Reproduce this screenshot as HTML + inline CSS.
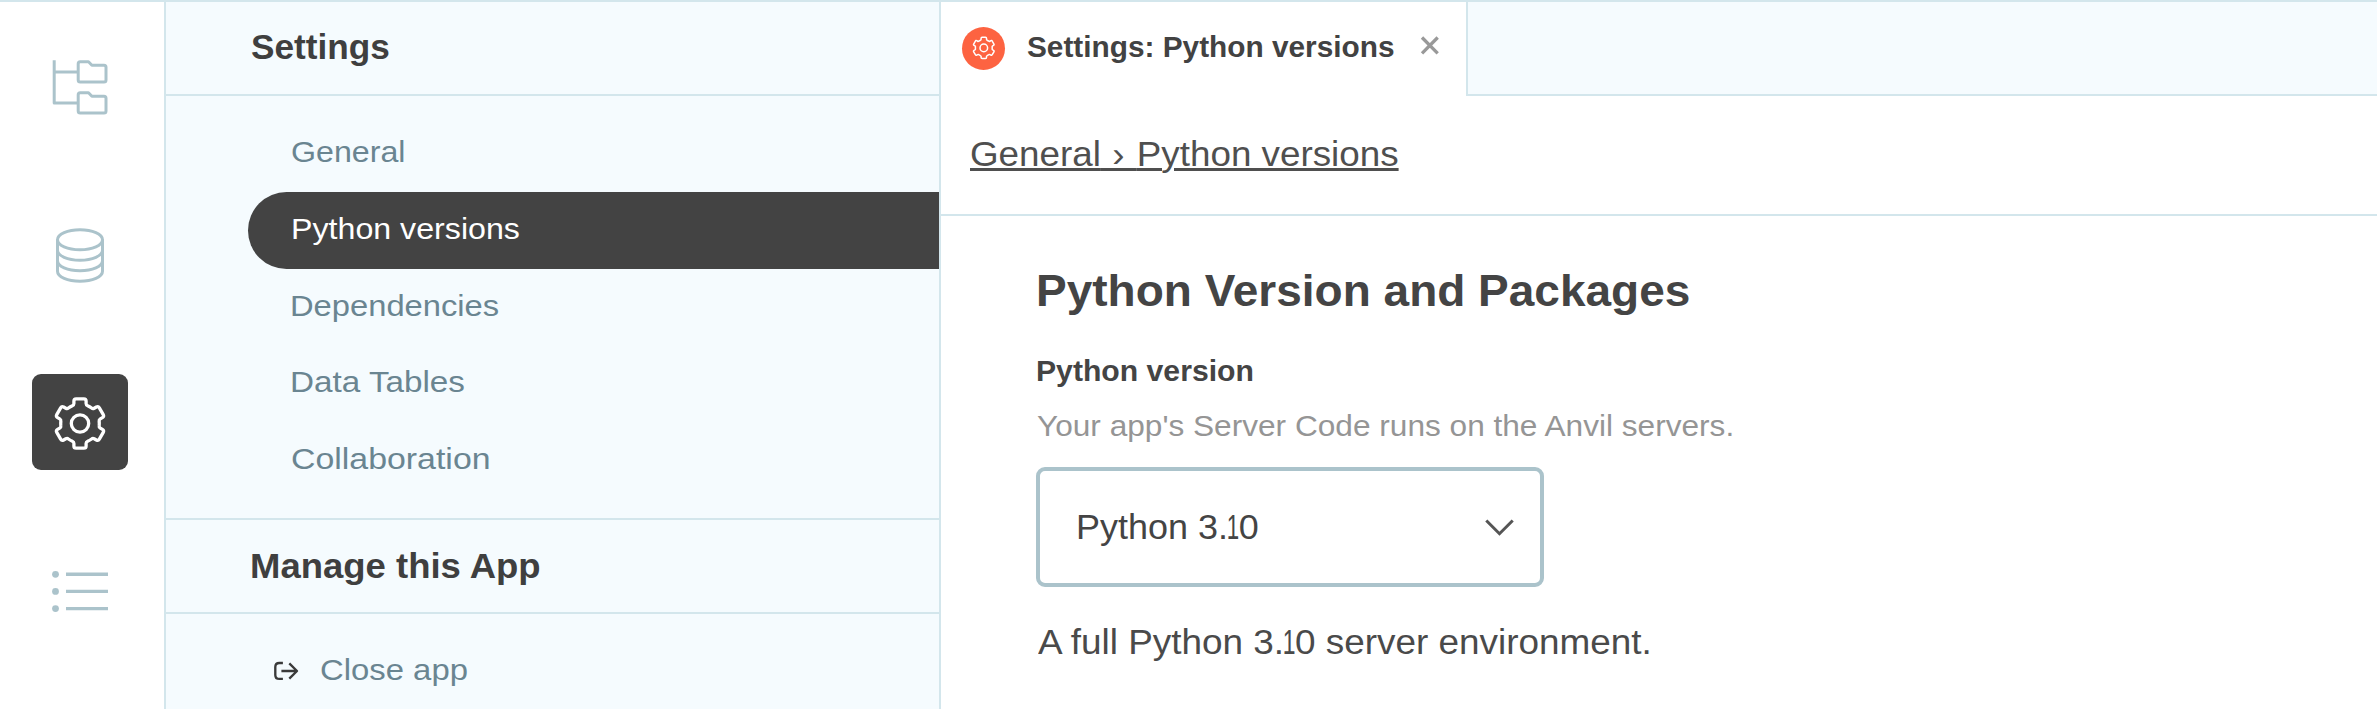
<!DOCTYPE html>
<html><head><meta charset="utf-8">
<style>
html,body{margin:0;padding:0;}
body{width:2377px;height:709px;position:relative;overflow:hidden;background:#fff;font-family:"Liberation Sans",sans-serif;}
.a{position:absolute;}
.t{position:absolute;white-space:nowrap;line-height:1;transform-origin:0 0;}
.one{display:inline-block;transform:scaleX(0.62);margin:0 -0.12em 0 -0.14em;}
#topb{left:0;top:0;width:2377px;height:2px;background:#d3e6ec;}
#side{left:164px;top:2px;width:773px;height:707px;background:#f5fbfe;border-left:2px solid #d3e6ec;border-right:2px solid #d3e6ec;}
.hl{position:absolute;height:2px;background:#d3e6ec;}
#pill{left:248px;top:192px;width:691px;height:77px;background:#434343;border-radius:38.5px 0 0 38.5px;}
#fill{left:1466px;top:2px;width:911px;height:92px;background:#f5fbfe;border-left:2px solid #d3e6ec;border-bottom:2px solid #d3e6ec;}
#gearbox{left:32px;top:374px;width:96px;height:96px;background:#434343;border-radius:9px;}
#circ{left:962px;top:26.7px;width:43.2px;height:43.2px;border-radius:50%;background:#fd6341;}
#dbox{left:1036px;top:467px;width:500px;height:112px;border:4px solid #abc3cb;border-radius:9px;}
#hdr{left:250.99px;top:29.88px;font-size:34.4px;font-weight:700;transform:scaleX(1.0239);color:#3f3f3f;}
#gen{left:290.88px;top:138.32px;font-size:28.8px;font-weight:400;transform:scaleX(1.1170);color:#6a8591;}
#pyv{left:290.61px;top:214.92px;font-size:28.8px;font-weight:400;transform:scaleX(1.1172);color:#fff;}
#dep{left:290.09px;top:291.62px;font-size:28.8px;font-weight:400;transform:scaleX(1.1359);color:#6a8591;}
#dt{left:290.04px;top:367.62px;font-size:28.8px;font-weight:400;transform:scaleX(1.1547);color:#6a8591;}
#col{left:291.04px;top:445.12px;font-size:28.8px;font-weight:400;transform:scaleX(1.1760);color:#6a8591;}
#man{left:250.28px;top:548.75px;font-size:34.2px;font-weight:700;transform:scaleX(1.0673);color:#3f3f3f;}
#close{left:319.67px;top:655.03px;font-size:29.5px;font-weight:400;transform:scaleX(1.1137);color:#6a8591;}
#tab{left:1026.97px;top:32.54px;font-size:28.9px;font-weight:700;transform:scaleX(1.0311);color:#424242;}
#bc{left:969.59px;top:136.97px;font-size:34.3px;font-weight:400;transform:scaleX(1.0728);color:#4f4f4f;text-decoration:underline;text-decoration-thickness:2.6px;text-underline-offset:2.2px;}
#h1{left:1035.75px;top:268.04px;font-size:45.2px;font-weight:700;transform:scaleX(1.0178);color:#444;}
#lab{left:1035.95px;top:356.31px;font-size:29.4px;font-weight:700;transform:scaleX(1.0263);color:#444;}
#desc{left:1036.91px;top:411.55px;font-size:29px;font-weight:400;transform:scaleX(1.0901);color:#959595;}
#dd{left:1076.13px;top:509.27px;font-size:35px;font-weight:400;transform:scaleX(1.0276);color:#444;}
#fin{left:1038.00px;top:625.07px;font-size:34.3px;font-weight:400;transform:scaleX(1.0757);color:#4a4a4a;}
svg{position:absolute;left:0;top:0;overflow:visible;}
</style></head><body>
<div class="a" id="topb"></div>
<div class="a" id="side"></div>
<div class="hl" style="left:166px;top:94px;width:773px;"></div>
<div class="hl" style="left:166px;top:518px;width:773px;"></div>
<div class="hl" style="left:166px;top:612px;width:773px;"></div>
<div class="a" id="fill"></div>
<div class="hl" style="left:941px;top:214px;width:1436px;"></div>
<div class="a" id="pill"></div>
<div class="a" id="gearbox"></div>
<div class="a" id="circ"></div>
<div class="a" id="dbox"></div>
<svg width="2377" height="709" viewBox="0 0 2377 709">
 <g fill="none" stroke="#abc3cb" stroke-width="3" stroke-linejoin="round" stroke-linecap="butt">
  <path d="M54.2 60.2 V103 H78.2 M54.2 72 H78.2"/>
  <path d="M80.2 61.7 H88.5 L91.9 65.2 H104 Q106 65.2 106 67.2 V80.1 Q106 82.1 104 82.1 H80.2 Q78.2 82.1 78.2 80.1 V63.7 Q78.2 61.7 80.2 61.7 Z"/>
  <path d="M80.2 92.7 H88.5 L91.9 96.2 H104 Q106 96.2 106 98.2 V111.1 Q106 113.1 104 113.1 H80.2 Q78.2 113.1 78.2 111.1 V94.7 Q78.2 92.7 80.2 92.7 Z"/>
  <ellipse cx="80" cy="239.7" rx="22.5" ry="10"/>
  <path d="M57.5 239.7 V271.3 A22.5 10 0 0 0 102.5 271.3 V239.7 M57.5 250.2 A22.5 10 0 0 0 102.5 250.2 M57.5 260.8 A22.5 10 0 0 0 102.5 260.8"/>
  <path d="M66 574.3 H108 M66 591.4 H108 M66 608.6 H108" stroke-width="3.4"/>
 </g>
 <g fill="#abc3cb"><circle cx="55.5" cy="574.3" r="3.4"/><circle cx="55.5" cy="591.4" r="3.4"/><circle cx="55.5" cy="608.6" r="3.4"/></g>
 <g fill="none" stroke="#fff" stroke-linejoin="round">
  <path d="M72.40 405.76 Q73.90 405.19 73.90 403.59 L73.90 401.10 Q73.90 398.90 76.10 398.90 L83.90 398.90 Q86.10 398.90 86.10 401.10 L86.10 403.59 Q86.10 405.19 87.60 405.76 A19.30 19.30 0 0 1 91.57 408.05 Q92.81 409.06 94.19 408.26 L96.35 407.02 Q98.25 405.92 99.35 407.82 L103.25 414.58 Q104.35 416.48 102.45 417.58 L100.29 418.83 Q98.91 419.63 99.16 421.21 A19.30 19.30 0 0 1 99.16 425.79 Q98.91 427.37 100.29 428.17 L102.45 429.42 Q104.35 430.52 103.25 432.42 L99.35 439.18 Q98.25 441.08 96.35 439.98 L94.19 438.74 Q92.81 437.94 91.57 438.95 A19.30 19.30 0 0 1 87.60 441.24 Q86.10 441.81 86.10 443.41 L86.10 445.90 Q86.10 448.10 83.90 448.10 L76.10 448.10 Q73.90 448.10 73.90 445.90 L73.90 443.41 Q73.90 441.81 72.40 441.24 A19.30 19.30 0 0 1 68.43 438.95 Q67.19 437.94 65.81 438.74 L63.65 439.98 Q61.75 441.08 60.65 439.18 L56.75 432.42 Q55.65 430.52 57.55 429.42 L59.71 428.17 Q61.09 427.37 60.84 425.79 A19.30 19.30 0 0 1 60.84 421.21 Q61.09 419.63 59.71 418.83 L57.55 417.58 Q55.65 416.48 56.75 414.58 L60.65 407.82 Q61.75 405.92 63.65 407.02 L65.81 408.26 Q67.19 409.06 68.43 408.05 A19.30 19.30 0 0 1 72.40 405.76 Z" stroke-width="3.3"/>
  <circle cx="80" cy="423.5" r="8.7" stroke-width="3.3"/>
  <path d="M980.45 40.20 Q981.10 39.95 981.10 39.25 L981.10 38.20 Q981.10 37.20 982.10 37.20 L985.50 37.20 Q986.50 37.20 986.50 38.20 L986.50 39.25 Q986.50 39.95 987.15 40.20 A8.40 8.40 0 0 1 988.79 41.15 Q989.34 41.58 989.94 41.23 L990.85 40.71 Q991.72 40.21 992.22 41.08 L993.92 44.02 Q994.42 44.89 993.55 45.39 L992.64 45.91 Q992.04 46.26 992.15 46.95 A8.40 8.40 0 0 1 992.15 48.85 Q992.04 49.54 992.64 49.89 L993.55 50.41 Q994.42 50.91 993.92 51.78 L992.22 54.72 Q991.72 55.59 990.85 55.09 L989.94 54.57 Q989.34 54.22 988.79 54.65 A8.40 8.40 0 0 1 987.15 55.60 Q986.50 55.85 986.50 56.55 L986.50 57.60 Q986.50 58.60 985.50 58.60 L982.10 58.60 Q981.10 58.60 981.10 57.60 L981.10 56.55 Q981.10 55.85 980.45 55.60 A8.40 8.40 0 0 1 978.81 54.65 Q978.26 54.22 977.66 54.57 L976.75 55.09 Q975.88 55.59 975.38 54.72 L973.68 51.78 Q973.18 50.91 974.05 50.41 L974.96 49.89 Q975.56 49.54 975.45 48.85 A8.40 8.40 0 0 1 975.45 46.95 Q975.56 46.26 974.96 45.91 L974.05 45.39 Q973.18 44.89 973.68 44.02 L975.38 41.08 Q975.88 40.21 976.75 40.71 L977.66 41.23 Q978.26 41.58 978.81 41.15 A8.40 8.40 0 0 1 980.45 40.20 Z" stroke-width="1.5"/>
  <circle cx="983.8" cy="47.9" r="3.8" stroke-width="1.5"/>
 </g>
 <g fill="none" stroke="#3a3a3a" stroke-width="2.35" stroke-linejoin="round">
  <path d="M282.9 663 H279.3 Q275.3 663 275.3 667 V674.9 Q275.3 678.9 279.3 678.9 H282.9"/>
  <path d="M281.4 671 H296.5 M289.3 663.3 L297 671 L289.3 678.7"/>
 </g>
 <path d="M1422 37.5 L1437.7 53.3 M1437.7 37.5 L1422 53.3" stroke="#999" stroke-width="3.3" fill="none"/>
 <path d="M1486.3 520.5 L1499.5 533.7 L1512.7 520.5" stroke="#555" stroke-width="3" fill="none"/>
</svg>
<div class="t" id="hdr">Settings</div>
<div class="t" id="gen">General</div>
<div class="t" id="pyv">Python versions</div>
<div class="t" id="dep">Dependencies</div>
<div class="t" id="dt">Data Tables</div>
<div class="t" id="col">Collaboration</div>
<div class="t" id="man">Manage this App</div>
<div class="t" id="close">Close app</div>
<div class="t" id="tab">Settings: Python versions</div>
<div class="t" id="bc">General<span style="letter-spacing:1px"> › </span>Python versions</div>
<div class="t" id="h1">Python Version and Packages</div>
<div class="t" id="lab">Python version</div>
<div class="t" id="desc">Your app's Server Code runs on the Anvil servers.</div>
<div class="t" id="dd">Python 3.<span class="one">1</span>0</div>
<div class="t" id="fin">A full Python 3.<span class="one">1</span>0 server environment.</div>
</body></html>
